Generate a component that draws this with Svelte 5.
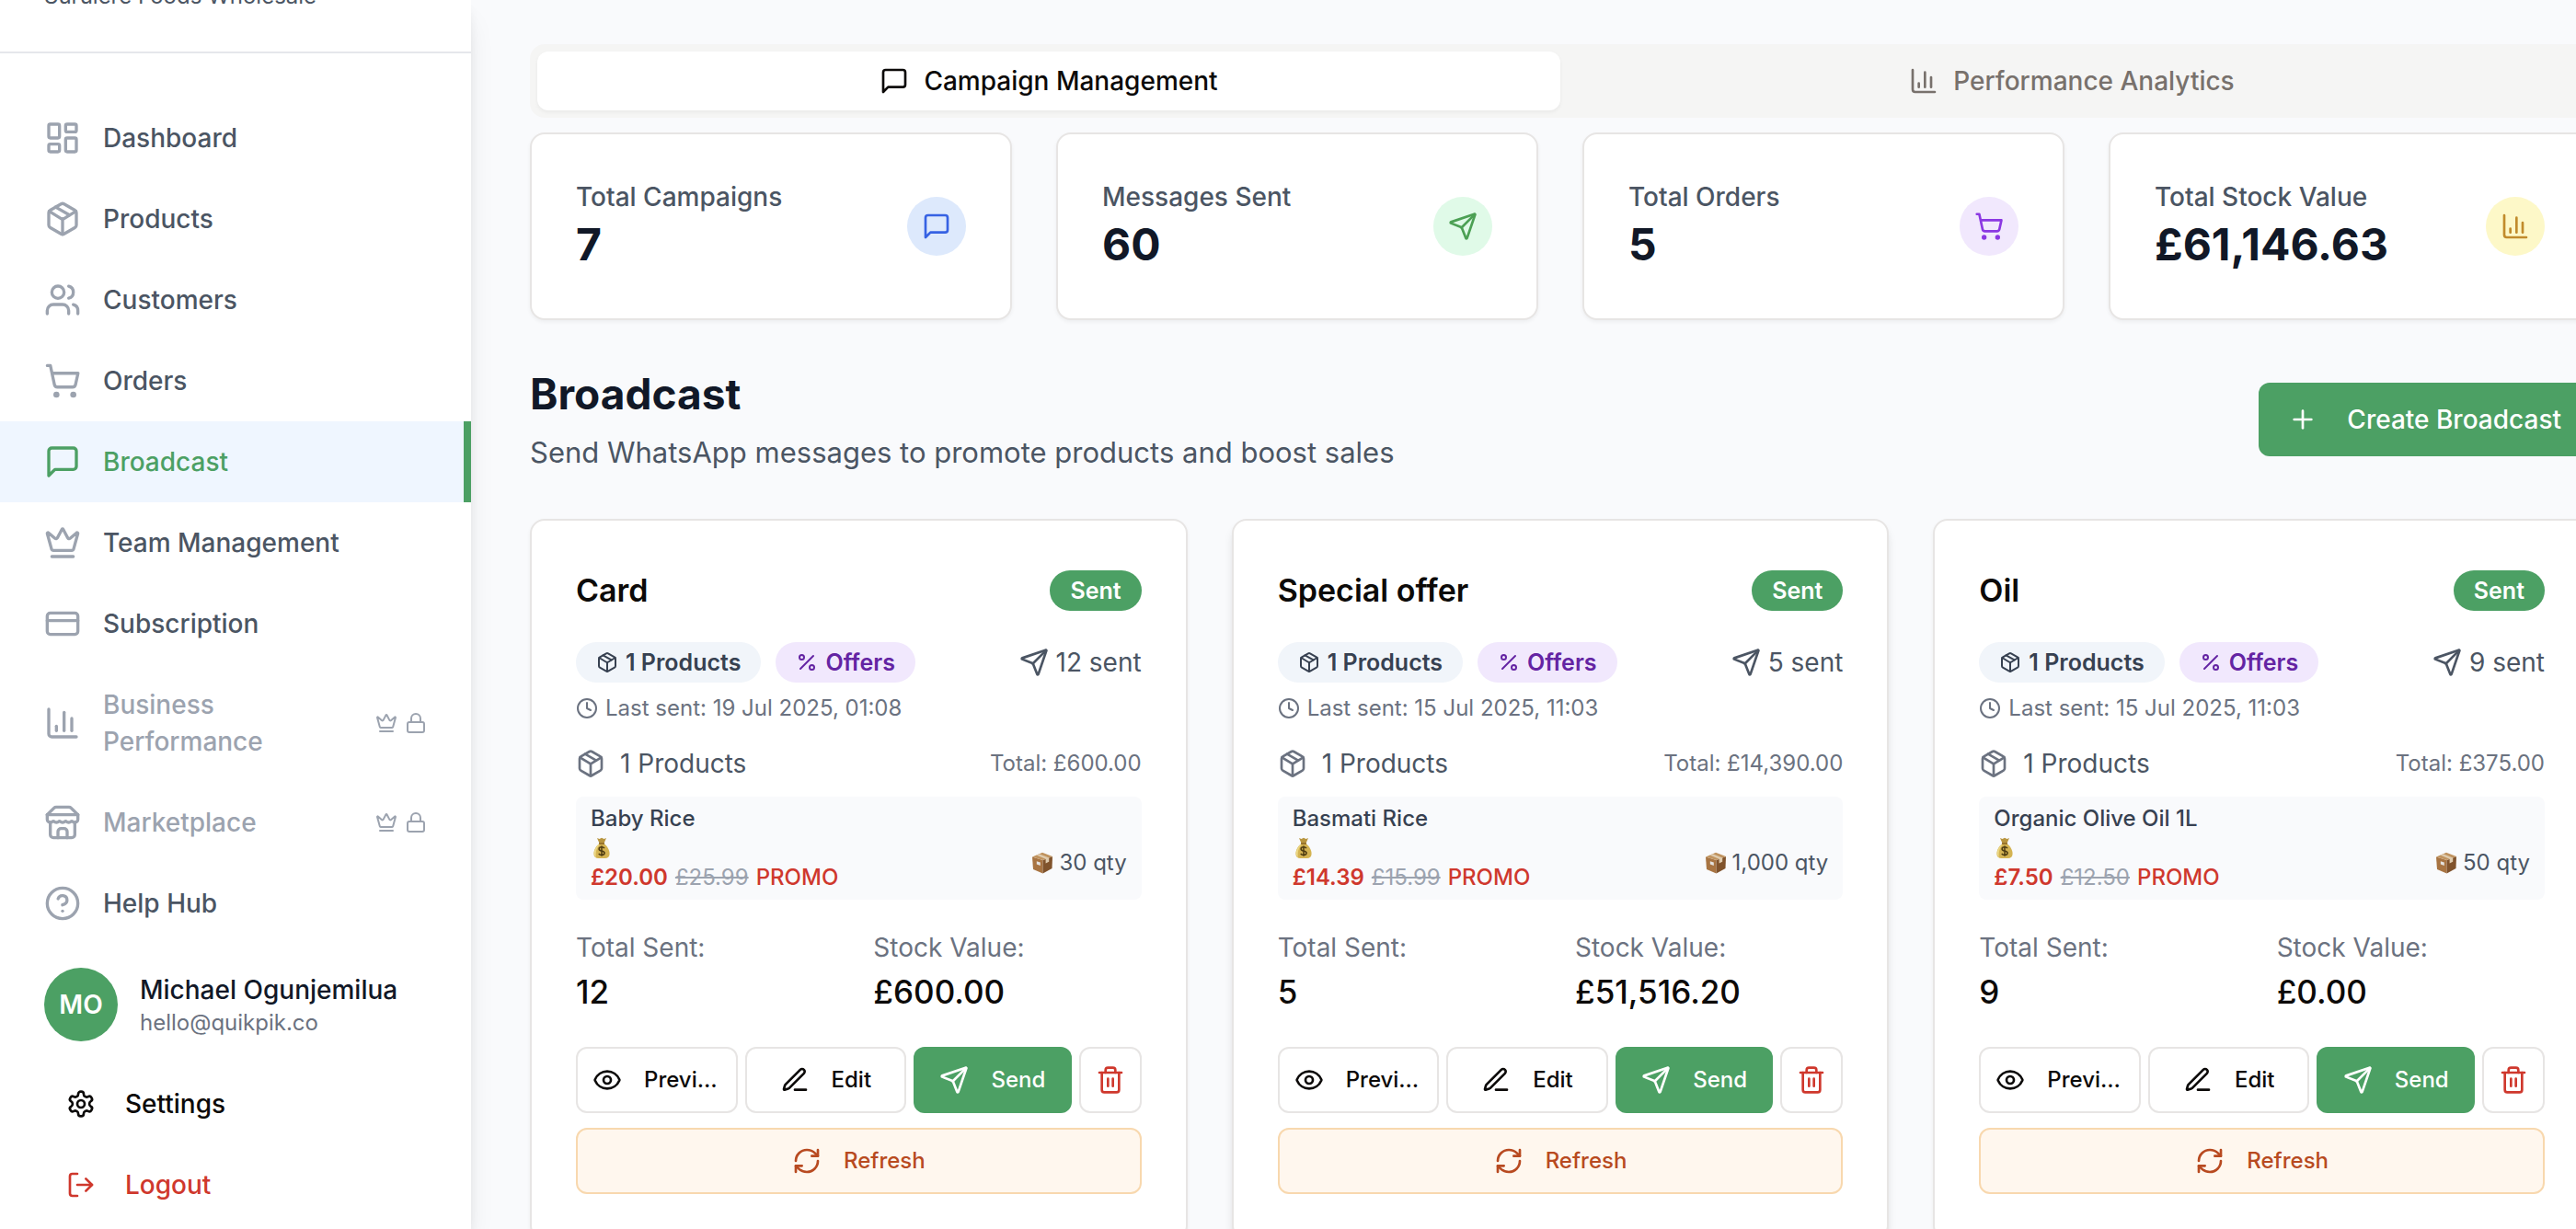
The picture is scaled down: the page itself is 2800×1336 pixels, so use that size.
<script>
  const icons = {
    dashboard: '<rect x="3" y="3" width="7" height="9" rx="1"/><rect x="14" y="3" width="7" height="5" rx="1"/><rect x="14" y="12" width="7" height="9" rx="1"/><rect x="3" y="16" width="7" height="5" rx="1"/>',
    package: '<path d="M11 21.73a2 2 0 0 0 2 0l7-4A2 2 0 0 0 21 16V8a2 2 0 0 0-1-1.73l-7-4a2 2 0 0 0-2 0l-7 4A2 2 0 0 0 3 8v8a2 2 0 0 0 1 1.73z"/><path d="M12 22V12"/><path d="m3.3 7 7.703 4.734a2 2 0 0 0 1.994 0L20.7 7"/><path d="m7.5 4.27 9 5.15"/>',
    users: '<path d="M16 21v-2a4 4 0 0 0-4-4H6a4 4 0 0 0-4 4v2"/><circle cx="9" cy="7" r="4"/><path d="M22 21v-2a4 4 0 0 0-3-3.87"/><path d="M16 3.13a4 4 0 0 1 0 7.75"/>',
    cart: '<circle cx="8" cy="21" r="1"/><circle cx="19" cy="21" r="1"/><path d="M2.05 2.05h2l2.66 12.42a2 2 0 0 0 2 1.58h9.78a2 2 0 0 0 1.95-1.57l1.65-7.43H5.12"/>',
    message: '<path d="M21 15a2 2 0 0 1-2 2H7l-4 4V5a2 2 0 0 1 2-2h14a2 2 0 0 1 2 2z"/>',
    crown: '<path d="M11.562 3.266a.5.5 0 0 1 .876 0L15.39 8.87a1 1 0 0 0 1.516.294L21.183 5.5a.5.5 0 0 1 .798.519l-2.834 10.246a1 1 0 0 1-.956.734H5.81a1 1 0 0 1-.957-.734L2.02 6.02a.5.5 0 0 1 .798-.519l4.276 3.664a1 1 0 0 0 1.516-.294z"/><path d="M5 21h14"/>',
    card: '<rect width="20" height="14" x="2" y="5" rx="2"/><path d="M2 10h20"/>',
    chart: '<path d="M3 3v16a2 2 0 0 0 2 2h16"/><path d="M18 17V9"/><path d="M13 17V5"/><path d="M8 17v-3"/>',
    store: '<path d="m2 7 4.41-4.41A2 2 0 0 1 7.83 2h8.34a2 2 0 0 1 1.42.59L22 7"/><path d="M4 12v8a2 2 0 0 0 2 2h12a2 2 0 0 0 2-2v-8"/><path d="M15 22v-4a2 2 0 0 0-2-2h-2a2 2 0 0 0-2 2v4"/><path d="M2 7h20"/><path d="M22 7v3a2 2 0 0 1-2 2a2.7 2.7 0 0 1-1.59-.63.7.7 0 0 0-.82 0A2.7 2.7 0 0 1 16 12a2.7 2.7 0 0 1-1.59-.63.7.7 0 0 0-.82 0A2.7 2.7 0 0 1 12 12a2.7 2.7 0 0 1-1.59-.63.7.7 0 0 0-.82 0A2.7 2.7 0 0 1 8 12a2.7 2.7 0 0 1-1.59-.63.7.7 0 0 0-.82 0A2.7 2.7 0 0 1 4 12a2 2 0 0 1-2-2V7"/>',
    help: '<circle cx="12" cy="12" r="10"/><path d="M9.09 9a3 3 0 0 1 5.83 1c0 2-3 3-3 3"/><path d="M12 17h.01"/>',
    lock: '<rect width="18" height="11" x="3" y="11" rx="2"/><path d="M7 11V7a5 5 0 0 1 10 0v4"/>',
    settings: '<path d="M12.22 2h-.44a2 2 0 0 0-2 2v.18a2 2 0 0 1-1 1.73l-.43.25a2 2 0 0 1-2 0l-.15-.08a2 2 0 0 0-2.73.73l-.22.38a2 2 0 0 0 .73 2.73l.15.1a2 2 0 0 1 1 1.72v.51a2 2 0 0 1-1 1.74l-.15.09a2 2 0 0 0-.73 2.73l.22.38a2 2 0 0 0 2.73.73l.15-.08a2 2 0 0 1 2 0l.43.25a2 2 0 0 1 1 1.73V20a2 2 0 0 0 2 2h.44a2 2 0 0 0 2-2v-.18a2 2 0 0 1 1-1.73l.43-.25a2 2 0 0 1 2 0l.15.08a2 2 0 0 0 2.73-.73l.22-.39a2 2 0 0 0-.73-2.73l-.15-.08a2 2 0 0 1-1-1.74v-.5a2 2 0 0 1 1-1.74l.15-.09a2 2 0 0 0 .73-2.73l-.22-.38a2 2 0 0 0-2.73-.73l-.15.08a2 2 0 0 1-2 0l-.43-.25a2 2 0 0 1-1-1.73V4a2 2 0 0 0-2-2z"/><circle cx="12" cy="12" r="3"/>',
    logout: '<path d="M9 21H5a2 2 0 0 1-2-2V5a2 2 0 0 1 2-2h4"/><path d="m16 17 5-5-5-5"/><path d="M21 12H9"/>',
    send: '<path d="M14.536 21.686a.5.5 0 0 0 .937-.024l6.5-19a.496.496 0 0 0-.635-.635l-19 6.5a.5.5 0 0 0-.024.937l7.93 3.18a2 2 0 0 1 1.112 1.11z"/><path d="m21.854 2.147-10.94 10.939"/>',
    plus: '<path d="M5 12h14"/><path d="M12 5v14"/>',
    percent: '<path d="M19 5 5 19"/><circle cx="6.5" cy="6.5" r="2.5"/><circle cx="17.5" cy="17.5" r="2.5"/>',
    clock: '<circle cx="12" cy="12" r="10"/><path d="M12 6v6l4 2"/>',
    eye: '<path d="M2.062 12.348a1 1 0 0 1 0-.696 10.75 10.75 0 0 1 19.876 0 1 1 0 0 1 0 .696 10.75 10.75 0 0 1-19.876 0"/><circle cx="12" cy="12" r="3"/>',
    pen: '<path d="M12 20h9"/><path d="M16.376 3.622a1 1 0 0 1 3.002 3.002L7.368 18.635a2 2 0 0 1-.855.506l-2.872.838a.5.5 0 0 1-.62-.62l.838-2.872a2 2 0 0 1 .506-.854z"/>',
    trash: '<path d="M3 6h18"/><path d="M19 6v14a2 2 0 0 1-2 2H7a2 2 0 0 1-2-2V6"/><path d="M8 6V4a2 2 0 0 1 2-2h4a2 2 0 0 1 2 2v2"/><path d="M10 11v6"/><path d="M14 11v6"/>',
    refresh: '<path d="M3 12a9 9 0 0 1 9-9 9.75 9.75 0 0 1 6.74 2.74L21 8"/><path d="M21 3v5h-5"/><path d="M21 12a9 9 0 0 1-9 9 9.75 9.75 0 0 1-6.74-2.74L3 16"/><path d="M8 16H3v5"/>'
  };

  const nav = [
    { label: 'Dashboard', icon: 'dashboard' },
    { label: 'Products', icon: 'package' },
    { label: 'Customers', icon: 'users' },
    { label: 'Orders', icon: 'cart' },
    { label: 'Broadcast', icon: 'message', active: true },
    { label: 'Team Management', icon: 'crown' },
    { label: 'Subscription', icon: 'card' },
    { label: 'Business Performance', icon: 'chart', locked: true },
    { label: 'Marketplace', icon: 'store', locked: true },
    { label: 'Help Hub', icon: 'help' }
  ];

  const stats = [
    { label: 'Total Campaigns', value: '7', icon: 'message', tone: 'blue' },
    { label: 'Messages Sent', value: '60', icon: 'send', tone: 'green' },
    { label: 'Total Orders', value: '5', icon: 'cart', tone: 'purple' },
    { label: 'Total Stock Value', value: '£61,146.63', icon: 'chart', tone: 'yellow' }
  ];

  const campaigns = [
    { title: 'Card', sent: 12, date: '19 Jul 2025, 01:08', total: '£600.00', product: 'Baby Rice', price: '£20.00', was: '£25.99', qty: '30', stock: '£600.00' },
    { title: 'Special offer', sent: 5, date: '15 Jul 2025, 11:03', total: '£14,390.00', product: 'Basmati Rice', price: '£14.39', was: '£15.99', qty: '1,000', stock: '£51,516.20', raised: true },
    { title: 'Oil', sent: 9, date: '15 Jul 2025, 11:03', total: '£375.00', product: 'Organic Olive Oil 1L', price: '£7.50', was: '£12.50', qty: '50', stock: '£0.00' }
  ];

  let tab = $state('campaigns');
</script>

{#snippet icon(name, size = 'md')}
  <svg class="icon {size}" viewBox="0 0 24 24" aria-hidden="true">{@html icons[name]}</svg>
{/snippet}

{#snippet moneyBag()}
  <svg class="emoji" viewBox="0 0 24 24" aria-hidden="true">
    <path d="M7 1l2.500 1 2.500-1.200 2.500 1.200 2.500-1-2.500 5.700h-5z" fill="#b8953f" />
    <path d="M9.600 7h4.800c3.600 2.600 6.200 7 6.200 11 0 3.200-2 5-5 5H8.400c-3 0-5-1.800-5-5 0-4 2.600-8.400 6.200-11z" fill="#d4b352" />
    <path d="M9.400 7.200c-3 2.600-5.600 6.600-5.600 10.600 0 2 .8 3.500 2.200 4.200-1-5 .4-10.600 4.400-14.800z" fill="#ecd784" />
    <path d="M9 6.200h6v1.600H9z" fill="#8b6420" />
    <path d="M15 12.200c-.6-1-1.700-1.400-3-1.400-1.700 0-2.900.8-2.900 2.100 0 3 6 1.300 6 4.400 0 1.400-1.300 2.200-3.100 2.200-1.500 0-2.600-.6-3.200-1.700M12 9.400v11.400" fill="none" stroke="#4d3b12" stroke-width="1.500" />
  </svg>
{/snippet}

{#snippet parcel()}
  <svg class="emoji" viewBox="0 0 24 24" aria-hidden="true">
    <path d="M1 5.500 12.500 9v14.500L2 19z" fill="#a87442" />
    <path d="M23 5 12.500 9v14.500L22.500 18z" fill="#80532c" />
    <path d="M1 5.500 12 .8 23 5 12.500 9z" fill="#c0935f" />
    <path d="M5.400 3.600 8.600 2.200 19.200 6.500v4.300l-3.600 1.600V7.800z" fill="#dfcbae" />
    <path d="M5.800 10.200l4 1.300v3.600l-4-1.500z" fill="#e4e2df" />
  </svg>
{/snippet}

<div class="app">
  <aside class="sidebar">
    <div class="brand">Surulere Foods Wholesale</div>
    <nav>
      {#each nav as item}
        <a href="#{item.icon}" class:active={item.active} class:locked={item.locked} aria-current={item.active ? 'page' : undefined}>
          {@render icon(item.icon, 'lg')}
          <span class="label">{item.label}</span>
          {#if item.locked}
            <span class="marks">{@render icon('crown', 'sm')}{@render icon('lock', 'sm')}</span>
          {/if}
        </a>
      {/each}
    </nav>
    <div class="user">
      <span class="avatar">MO</span>
      <div>
        <div class="name">Michael Ogunjemilua</div>
        <div class="email">hello@quikpik.co</div>
      </div>
    </div>
    <div class="account">
      <button type="button">{@render icon('settings')}Settings</button>
      <button type="button" class="logout">{@render icon('logout')}Logout</button>
    </div>
  </aside>

  <main>
    <div class="tabs" role="tablist">
      <button type="button" role="tab" aria-selected={tab === 'campaigns'} onclick={() => (tab = 'campaigns')}>
        {@render icon('message')}Campaign Management
      </button>
      <button type="button" role="tab" aria-selected={tab === 'analytics'} onclick={() => (tab = 'analytics')}>
        {@render icon('chart')}Performance Analytics
      </button>
    </div>

    <section class="stats">
      {#each stats as s}
        <div class="stat panel">
          <div>
            <div class="stat-label">{s.label}</div>
            <div class="stat-value">{s.value}</div>
          </div>
          <span class="dot {s.tone}">{@render icon(s.icon)}</span>
        </div>
      {/each}
    </section>

    <header>
      <div>
        <h1>Broadcast</h1>
        <p>Send WhatsApp messages to promote products and boost sales</p>
      </div>
      <button type="button" class="create">{@render icon('plus')}Create Broadcast</button>
    </header>

    <section class="campaigns">
      {#each campaigns as c}
        <article class="panel" class:raised={c.raised}>
          <div class="row">
            <h2>{c.title}</h2>
            <span class="badge sent">Sent</span>
          </div>
          <div class="row tags">
            <div class="badges">
              <span class="badge products">{@render icon('package', 'sm')}1 Products</span>
              <span class="badge offers">{@render icon('percent', 'sm')}Offers</span>
            </div>
            <span class="count">{@render icon('send')}{c.sent} sent</span>
          </div>
          <div class="last">{@render icon('clock', 'sm')}Last sent: {c.date}</div>
          <div class="row summary">
            <span class="summary-label">{@render icon('package')}1 Products</span>
            <span class="total">Total: {c.total}</span>
          </div>
          <div class="product">
            <div class="product-name">{c.product}</div>
            <div class="row">
              <div>
                <div class="bag">{@render moneyBag()}</div>
                <div class="price"><strong>{c.price}</strong><s>{c.was}</s><span>PROMO</span></div>
              </div>
              <span class="qty">{@render parcel()}{c.qty} qty</span>
            </div>
          </div>
          <dl>
            <div><dt>Total Sent:</dt><dd>{c.sent}</dd></div>
            <div><dt>Stock Value:</dt><dd>{c.stock}</dd></div>
          </dl>
          <div class="actions">
            <button type="button" class="wide">{@render icon('eye')}<span>Preview</span></button>
            <button type="button" class="wide">{@render icon('pen')}<span>Edit</span></button>
            <button type="button" class="wide primary">{@render icon('send')}<span>Send</span></button>
            <button type="button" class="delete" aria-label="Delete campaign">{@render icon('trash')}</button>
          </div>
          <button type="button" class="refresh">{@render icon('refresh')}<span>Refresh</span></button>
        </article>
      {/each}
    </section>
  </main>
</div>

<style>
  :global(body) {
    background: #f9fafc;
    font-family: Inter, "Liberation Sans", sans-serif;
    color: #0c0a09;
  }
  .app, .app :global(*) { box-sizing: border-box; }
  .app {
    display: flex;
    height: 100vh;
    overflow: hidden;
    font-size: 28px;
    line-height: 40px;
  }
  button { font: inherit; color: inherit; background: none; border: 0; margin: 0; cursor: pointer; }
  h1, h2, p, dl, dd { margin: 0; }

  .icon {
    flex: none;
    fill: none;
    stroke: currentColor;
    stroke-width: 2;
    stroke-linecap: round;
    stroke-linejoin: round;
  }
  .sm { width: 24px; height: 24px; }
  .md { width: 32px; height: 32px; }
  .lg { width: 40px; height: 40px; }
  .emoji { width: 24px; height: 24px; flex: none; }

  .sidebar {
    flex: none;
    display: flex;
    flex-direction: column;
    justify-content: flex-end;
    width: 512px;
    padding-bottom: 12px;
    background: #fff;
    box-shadow: 0 20px 30px -6px rgb(0 0 0 / 0.1), 0 8px 12px -4px rgb(0 0 0 / 0.1);
    font-weight: 500;
  }
  .brand {
    padding: 0 48px 44px;
    border-bottom: 2px solid #e5e7eb;
    color: #4b5563;
    font-size: 24px;
    line-height: 32px;
    font-weight: 400;
  }
  nav { padding: 48px 0 26px; }
  nav a {
    display: flex;
    align-items: center;
    gap: 24px;
    padding: 24px 48px;
    color: #4b5563;
    text-decoration: none;
  }
  nav a .icon { color: #9ca3af; }
  nav a.active { background: #eff6ff; color: #4ca064; box-shadow: inset -8px 0 #4ca064; }
  nav a.active .icon { color: #4ca064; }
  nav a.locked { color: #9ca3af; }
  .label { flex: 1; }
  .marks { display: flex; gap: 8px; }
  .user { display: flex; align-items: center; gap: 24px; padding: 0 48px; }
  .avatar {
    display: grid;
    place-items: center;
    width: 80px;
    height: 80px;
    border-radius: 50%;
    background: #4ca064;
    color: #fff;
    font-weight: 600;
  }
  .name { color: #111827; }
  .email { color: #6b7280; font-size: 24px; line-height: 32px; font-weight: 400; }
  .account { display: flex; flex-direction: column; gap: 16px; padding: 32px 48px 0; }
  .account button {
    display: flex;
    align-items: center;
    gap: 32px;
    height: 72px;
    padding: 0 24px;
    font-weight: 500;
  }
  .account .logout { color: #cf382d; }

  main { flex: 1; min-width: 0; margin-right: -16px; padding: 48px 0 0 64px; }
  .tabs {
    display: grid;
    grid-template-columns: 1fr 1fr;
    padding: 8px;
    border-radius: 16px;
    background: #f5f5f4;
  }
  .tabs button {
    display: flex;
    align-items: center;
    justify-content: center;
    gap: 16px;
    padding: 12px 24px;
    border-radius: 12px;
    color: #78716c;
    font-weight: 500;
  }
  .tabs button[aria-selected="true"] { background: #fff; color: #0c0a09; box-shadow: 0 2px 4px rgb(0 0 0 / 0.05); }

  .panel {
    border: 2px solid #e7e5e4;
    border-radius: 16px;
    background: #fff;
    box-shadow: 0 2px 4px rgb(0 0 0 / 0.05);
    padding: 48px;
  }
  .stats { display: grid; grid-template-columns: repeat(4, 1fr); gap: 48px; margin-top: 16px; }
  .stat { display: flex; align-items: center; justify-content: space-between; }
  .stat-label { color: #4b5563; font-weight: 500; }
  .stat-value { color: #111827; font-size: 48px; line-height: 64px; font-weight: 700; }
  .dot { display: flex; padding: 16px; border-radius: 50%; }
  .blue { background: #dde9fc; color: #3662e3; }
  .green { background: #e0fae8; color: #4ca054; }
  .purple { background: #f1e8fd; color: #8b38e2; }
  .yellow { background: #fdf8c8; color: #c18b2c; }

  header { display: flex; align-items: center; justify-content: space-between; margin: 48px 0; }
  h1 { color: #111827; font-size: 46px; line-height: 64px; font-weight: 700; }
  header p { margin-top: 8px; color: #4b5563; font-size: 31px; line-height: 48px; }
  .create {
    display: flex;
    align-items: center;
    gap: 32px;
    height: 80px;
    padding: 0 32px;
    border-radius: 12px;
    background: #4ca064;
    color: #fff;
    font-weight: 500;
  }

  .campaigns { display: grid; grid-template-columns: repeat(3, 1fr); gap: 48px; }
  .raised { box-shadow: 0 8px 12px -2px rgb(0 0 0 / 0.1), 0 4px 8px -4px rgb(0 0 0 / 0.1); }
  .row { display: flex; align-items: center; justify-content: space-between; }
  h2 { font-size: 34px; line-height: 56px; font-weight: 600; }
  .badge {
    display: inline-flex;
    align-items: center;
    gap: 8px;
    height: 44px;
    padding: 0 22px;
    border-radius: 22px;
    font-size: 25px;
    line-height: 32px;
    font-weight: 600;
  }
  .sent { background: #4ca064; color: #fff; }
  .products { background: #f1f5fa; color: #374151; }
  .offers { background: #f1e8fd; color: #6424a3; }
  .tags { margin-top: 28px; }
  .badges { display: flex; gap: 16px; }
  .count { display: flex; align-items: center; gap: 8px; color: #4b5563; }
  .last {
    display: flex;
    align-items: center;
    gap: 8px;
    margin-top: 12px;
    color: #6b7280;
    font-size: 24px;
    line-height: 32px;
  }
  .summary { margin: 24px 0 16px; color: #4b5563; }
  .summary-label { display: flex; align-items: center; gap: 16px; }
  .summary-label .icon { color: #6b7280; }
  .total { color: #6b7280; font-size: 24px; line-height: 32px; }
  .product { padding: 8px 16px; border-radius: 8px; background: #f9fafc; font-size: 24px; line-height: 32px; }
  .product-name { color: #374151; font-weight: 500; }
  .bag { display: flex; align-items: center; height: 32px; }
  .price { display: flex; gap: 8px; color: #cf382d; font-weight: 500; }
  .price strong { font-weight: 600; }
  .price s { color: #9ca3af; font-weight: 400; }
  .qty { display: flex; align-items: center; gap: 6px; color: #4b5563; }
  dl { display: grid; grid-template-columns: 1fr 1fr; gap: 32px; margin: 32px 0; }
  dt { color: #6b7280; }
  dd { font-size: 35px; line-height: 56px; font-weight: 500; }
  .actions { display: flex; gap: 8px; }
  .actions button, .refresh {
    display: flex;
    align-items: center;
    justify-content: center;
    gap: 24px;
    height: 72px;
    padding: 0 16px;
    border: 2px solid #e7e5e4;
    border-radius: 12px;
    background: #fff;
    font-size: 24px;
    line-height: 32px;
    font-weight: 500;
  }
  .actions .wide { flex: 1 1 0; min-width: 0; }
  .wide span { overflow: hidden; text-overflow: ellipsis; white-space: nowrap; }
  .actions .primary { border: 0; background: #4ca064; color: #fff; }
  .actions .delete { color: #cf382d; }
  .refresh { width: 100%; margin-top: 16px; border-color: #f8d8ae; background: #fff7ee; color: #b84a20; }
</style>
